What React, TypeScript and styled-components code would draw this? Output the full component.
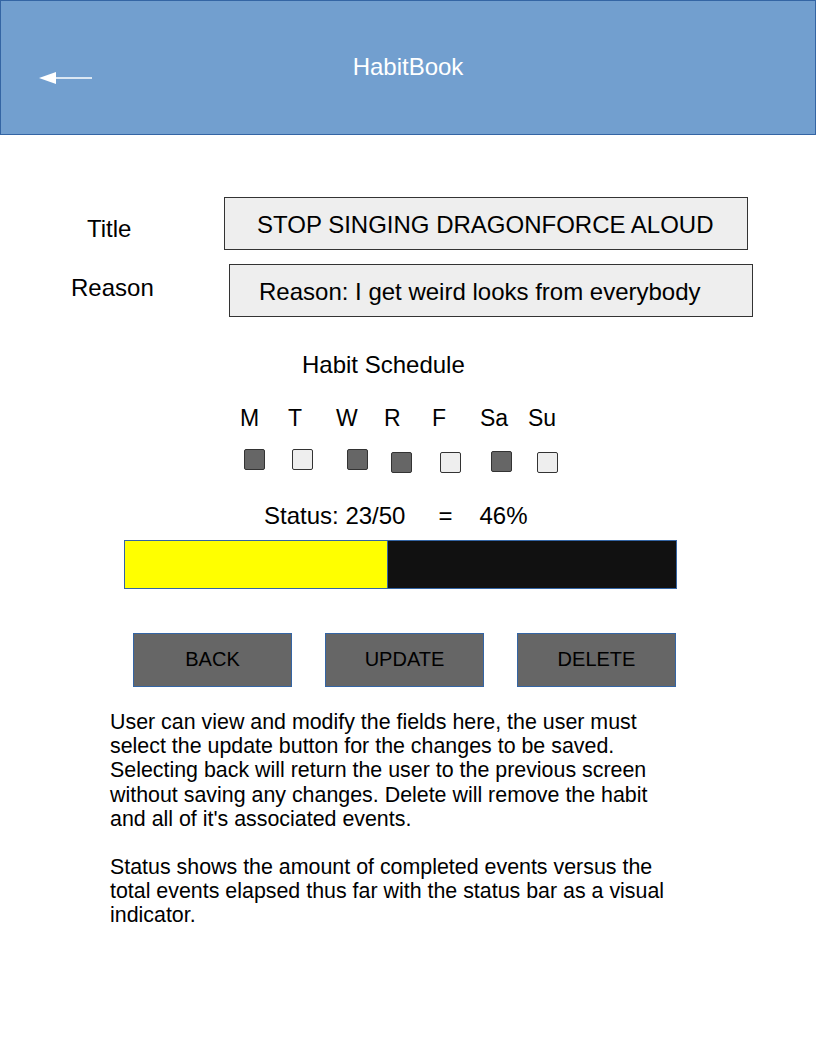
import React from "react";
import styled, { createGlobalStyle } from "styled-components";

const Global = createGlobalStyle`
  html, body { margin: 0; padding: 0; background: #ffffff; }
  body { font-family: "Liberation Sans", Arial, sans-serif; color: #000; }
`;

const Page = styled.div`
  width: 816px;
  min-height: 1056px;
  background: #fff;
`;

const Header = styled.header`
  box-sizing: border-box;
  height: 135px;
  background: #729fcf;
  border: 1px solid #3465a4;
  display: grid;
  grid-template-columns: 1fr auto 1fr;
  align-items: start;
`;

const BackArrow = styled.div`
  padding: 70px 0 0 37px;
  line-height: 0;
`;

const HeaderTitle = styled.h1`
  margin: 52px 0 0;
  font-size: 24px;
  font-weight: normal;
  color: #fff;
  line-height: 28px;
`;

const Form = styled.section`
  padding-top: 62px;
  display: flex;
  flex-direction: column;
`;

const FieldRow = styled.div<{ $top: number }>`
  display: grid;
  grid-template-columns: 224px 528px;
  margin-top: ${(p) => p.$top}px;
  align-items: center;
`;

const FieldLabel = styled.div<{ $left: number; $dy: number }>`
  font-size: 24px;
  padding-left: ${(p) => p.$left}px;
  position: relative;
  top: ${(p) => p.$dy}px;
`;

const FieldBox = styled.div<{ $left: number; $pad: number }>`
  box-sizing: border-box;
  margin-left: ${(p) => p.$left}px;
  width: 524px;
  height: 53px;
  background: #eeeeee;
  border: 1px solid #333333;
  font-size: 24px;
  display: flex;
  align-items: center;
  padding: 3px 0 0 ${(p) => p.$pad}px;
`;

const ScheduleTitle = styled.h2`
  margin: 34px 0 0 302px;
  font-size: 24px;
  font-weight: normal;
  line-height: 28px;
`;

const DayGrid = styled.div`
  display: grid;
  grid-template-columns: repeat(7, 48px);
  margin: 26px 0 0 240px;
  row-gap: 0;
`;

const DayLabel = styled.div`
  font-size: 23px;
  line-height: 26px;
`;

const DayBox = styled.div<{ $on: boolean; $ml: number; $mt: number }>`
  box-sizing: border-box;
  width: 21px;
  height: 21px;
  margin-left: ${(p) => p.$ml}px;
  margin-top: ${(p) => p.$mt}px;
  border: 1px solid #333;
  border-radius: 2px;
  background: ${(p) => (p.$on ? "#666666" : "#eeeeee")};
`;

const StatusLine = styled.div`
  margin: 30px 0 0 264px;
  font-size: 24px;
  line-height: 26px;
  display: flex;
`;

const Eq = styled.span`
  margin-left: 33px;
`;

const Pct = styled.span`
  margin-left: 27px;
`;

const Bar = styled.div`
  box-sizing: border-box;
  margin: 11px 0 0 124px;
  width: 553px;
  height: 49px;
  border: 1px solid #3465a4;
  background: #111111;
  display: flex;
`;

const BarFill = styled.div`
  height: 100%;
  background: #ffff00;
  border-right: 1px solid #3465a4;
  box-sizing: border-box;
`;

const Buttons = styled.div`
  display: flex;
  gap: 33px;
  margin: 44px 0 0 133px;
`;

const Button = styled.button`
  box-sizing: border-box;
  width: 159px;
  height: 54px;
  background: #666666;
  border: 1px solid #3465a4;
  font-family: "Liberation Sans", Arial, sans-serif;
  font-size: 20px;
  color: #000;
  padding: 0 0 2px;
`;

const Notes = styled.div`
  margin: 23px 0 0 110px;
  width: 620px;
  font-size: 21.4px;
  line-height: 24.2px;
`;

const Para = styled.p`
  margin: 0 0 24px;
`;

const days = [
  { d: "M", on: true, ml: 4, mt: 18 },
  { d: "T", on: false, ml: 4, mt: 18 },
  { d: "W", on: true, ml: 11, mt: 18 },
  { d: "R", on: true, ml: 7, mt: 21 },
  { d: "F", on: false, ml: 8, mt: 21 },
  { d: "Sa", on: true, ml: 11, mt: 20 },
  { d: "Su", on: false, ml: 9, mt: 21 },
];

export default function App() {
  const done = 23;
  const total = 50;
  return (
    <Page>
      <Global />
      <Header>
        <BackArrow>
          <svg width="56" height="14" viewBox="0 0 56 14">
            <polygon points="1,7 18,1 18,13" fill="#fff" />
            <line x1="16" y1="7" x2="54" y2="7" stroke="#fff" strokeWidth="1.5" />
          </svg>
        </BackArrow>
        <HeaderTitle>HabitBook</HeaderTitle>
        <div />
      </Header>
      <Form>
        <FieldRow $top={0}>
          <FieldLabel $left={87} $dy={5}>Title</FieldLabel>
          <FieldBox $left={0} $pad={32}>STOP SINGING DRAGONFORCE ALOUD</FieldBox>
        </FieldRow>
        <FieldRow $top={14}>
          <FieldLabel $left={71} $dy={-3}>Reason</FieldLabel>
          <FieldBox $left={5} $pad={29}>Reason: I get weird looks from everybody</FieldBox>
        </FieldRow>
        <ScheduleTitle>Habit Schedule</ScheduleTitle>
        <DayGrid>
          {days.map((x) => (
            <DayLabel key={x.d}>{x.d}</DayLabel>
          ))}
          {days.map((x) => (
            <DayBox key={x.d + "b"} $on={x.on} $ml={x.ml} $mt={x.mt} />
          ))}
        </DayGrid>
        <StatusLine>
          <span>Status: {done}/{total}</span>
          <Eq>=</Eq>
          <Pct>{Math.round((done / total) * 100)}%</Pct>
        </StatusLine>
        <Bar>
          <BarFill style={{ width: `${(done / total) * 100 + 1.8}%` }} />
        </Bar>
        <Buttons>
          <Button>BACK</Button>
          <Button>UPDATE</Button>
          <Button>DELETE</Button>
        </Buttons>
        <Notes>
          <Para>
            User can view and modify the fields here, the user must
            <br />
            select the update button for the changes to be saved.
            <br />
            Selecting back will return the user to the previous screen
            <br />
            without saving any changes. Delete will remove the habit
            <br />
            and all of it's associated events.
          </Para>
          <Para>
            Status shows the amount of completed events versus the
            <br />
            total events elapsed thus far with the status bar as a visual
            <br />
            indicator.
          </Para>
        </Notes>
      </Form>
    </Page>
  );
}
